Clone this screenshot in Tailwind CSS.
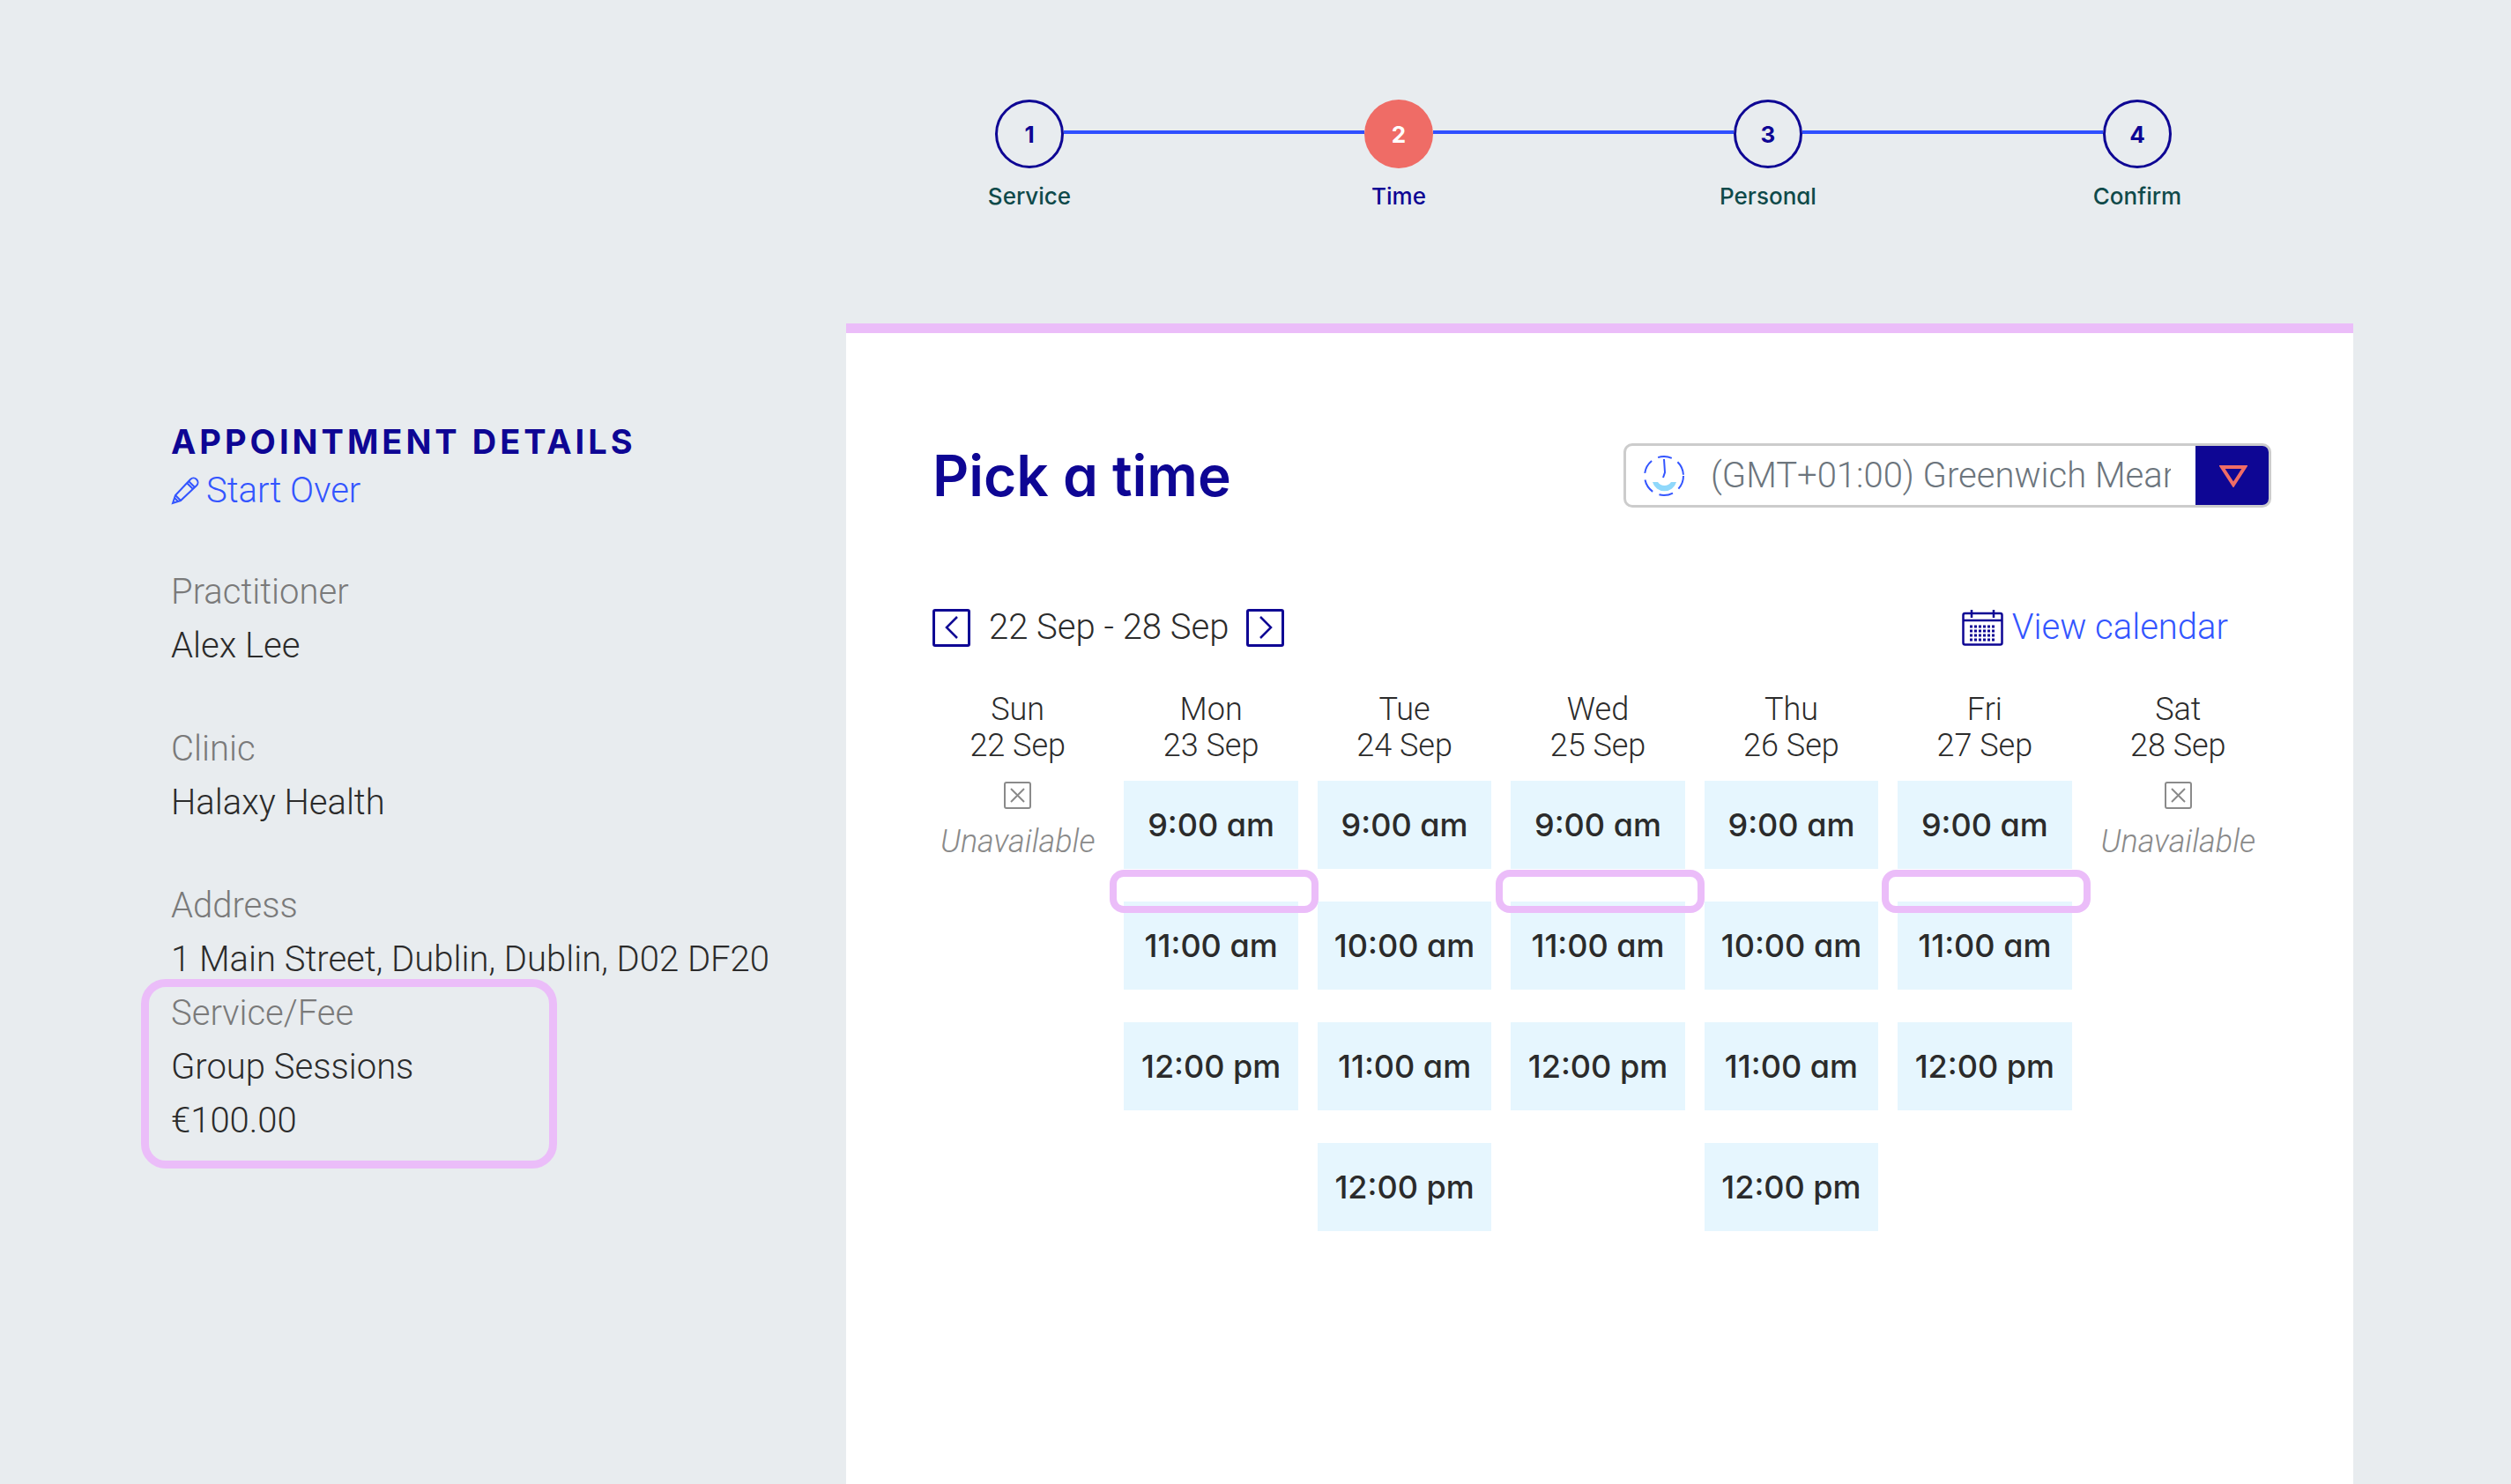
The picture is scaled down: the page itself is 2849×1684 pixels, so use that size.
<!DOCTYPE html>
<html>
<head>
<meta charset="utf-8">
<script src="https://cdn.jsdelivr.net/npm/@tailwindcss/browser@4"></script>
</head>
<body class="m-0 bg-[#e8ecef] font-['Roboto',sans-serif] font-light text-[#2b2b2b]">
<div class="relative flex h-[1684px] w-[2849px] overflow-hidden">
  <aside class="w-[960px] shrink-0 pl-[194px] pt-[476px]">
    <h2 class="font-['Inter',sans-serif] text-[38px] leading-[50px] font-bold tracking-[4px] text-[#0e0694]">APPOINTMENT DETAILS</h2>
    <a class="flex h-[62px] items-center gap-[8px] text-[40px] text-[#3355ff]">
      <svg class="h-[32px] w-[32px]" viewBox="0 0 32 32" fill="none" stroke="currentColor" stroke-width="2"><path d="M2 30l3-9L22 3c2-2 5-2 7 0s2 5 0 7L11 27z"/><path d="M5 21l6 6M20 5l7 7M18 7l7 7M4 24l4 4"/></svg>
      Start Over
    </a>
    <div class="mt-[53px] text-[40px] leading-[61px]">
      <p class="text-[#7a7a7a]">Practitioner</p>
      <p>Alex Lee</p>
      <p class="mt-[56px] text-[#7a7a7a]">Clinic</p>
      <p>Halaxy Health</p>
      <p class="mt-[56px] text-[#7a7a7a]">Address</p>
      <p>1 Main Street, Dublin, Dublin, D02 DF20</p>
      <p class="text-[#7a7a7a]">Service/Fee</p>
      <p>Group Sessions</p>
      <p>€100.00</p>
    </div>
  </aside>
  <main class="flex w-[1710px] shrink-0 flex-col">
    <nav class="ml-[128px] flex w-[1417px] pt-[113px] h-[367px] items-start font-['Inter',sans-serif] [font-feature-settings:'cv11'] text-[26px] font-medium text-[#0f4a4a]">
      <div class="flex w-[160px] shrink-0 flex-col items-center gap-[12px]">
        <span class="flex h-[78px] w-[78px] items-center justify-center rounded-full border-[3px] border-[#0e0694] font-bold text-[#0e0694]">1</span>
        <span>Service</span>
      </div>
      <span class="mx-[-41px] mt-[35px] h-[4px] flex-1 bg-[#2f4fff]"></span>
      <div class="flex w-[160px] shrink-0 flex-col items-center gap-[12px]">
        <span class="flex h-[78px] w-[78px] items-center justify-center rounded-full bg-[#ef6c66] font-bold text-white">2</span>
        <span class="text-[#0e0694]">Time</span>
      </div>
      <span class="mx-[-41px] mt-[35px] h-[4px] flex-1 bg-[#2f4fff]"></span>
      <div class="flex w-[160px] shrink-0 flex-col items-center gap-[12px]">
        <span class="flex h-[78px] w-[78px] items-center justify-center rounded-full border-[3px] border-[#0e0694] font-bold text-[#0e0694]">3</span>
        <span>Personal</span>
      </div>
      <span class="mx-[-41px] mt-[35px] h-[4px] flex-1 bg-[#2f4fff]"></span>
      <div class="flex w-[160px] shrink-0 flex-col items-center gap-[12px]">
        <span class="flex h-[78px] w-[78px] items-center justify-center rounded-full border-[3px] border-[#0e0694] font-bold text-[#0e0694]">4</span>
        <span>Confirm</span>
      </div>
    </nav>
    <section class="flex-1 border-t-[11px] border-[#ebbdf9] bg-white pl-[98px] pr-[93px]">
      <div class="mt-[125px] flex h-[73px] items-center justify-between">
        <h1 class="font-['Inter',sans-serif] [font-feature-settings:'cv11'] text-[64px] font-semibold text-[#0e0694]">Pick a time</h1>
        <div class="flex h-[73px] w-[735px] overflow-hidden rounded-[10px] border-[3px] border-[#cccccc]">
          <div class="flex min-w-0 flex-1 items-center pl-[18px] pr-[28px]">
            <svg class="mr-[28px] h-[50px] w-[50px] shrink-0" viewBox="0 0 50 50" fill="none" stroke="#3355ff" stroke-width="2">
              <path d="M12 32a14 14 0 0 0 27 0l-6 0a9 9 0 0 1-15 0z" fill="#8fd8fb" stroke="none"/>
              <circle cx="25" cy="25" r="22" stroke-dasharray="16 8"/>
              <path d="M25 6l1 15-2 6"/>
            </svg>
            <span class="overflow-hidden whitespace-nowrap text-[40px] text-[#6c757d]">(GMT+01:00) Greenwich Mean Time</span>
          </div>
          <div class="-my-[3px] -mr-[3px] flex w-[86px] shrink-0 items-center justify-center bg-[#0e0694]">
            <svg class="h-[26px] w-[32px]" viewBox="0 0 32 26" fill="none" stroke="#ef6c66" stroke-width="4"><path d="M3 3h26L16 23z"/></svg>
          </div>
        </div>
      </div>
      <div class="mt-[113px] flex h-[46px] items-center justify-between pr-[49px]">
        <div class="flex items-center">
          <span class="flex h-[43px] w-[43px] items-center justify-center rounded-[3px] border-[3px] border-[#0e0694]">
            <svg class="h-[28px] w-[16px]" viewBox="0 0 16 28" fill="none" stroke="#0e0694" stroke-width="2.5"><path d="M14 2L2 14l12 12"/></svg>
          </span>
          <span class="ml-[21px] mr-[20px] text-[40px]">22 Sep - 28 Sep</span>
          <span class="flex h-[43px] w-[43px] items-center justify-center rounded-[3px] border-[3px] border-[#0e0694]">
            <svg class="h-[28px] w-[16px]" viewBox="0 0 16 28" fill="none" stroke="#0e0694" stroke-width="2.5"><path d="M2 2l12 12L2 26"/></svg>
          </span>
        </div>
        <a class="flex items-center gap-[10px] text-[40px] text-[#3355ff]">
          <svg class="h-[42px] w-[47px]" viewBox="0 0 47 42" fill="none" stroke="#0e0694" stroke-width="2.5">
            <rect x="1.5" y="5" width="44" height="35.500" rx="2"/>
            <path d="M1.500 13h44M11 1v9M36 1v9"/>
            <path d="M9 20h29M9 25h29M9 30h29M9 35h29" stroke-width="3" stroke-dasharray="3 2"/>
          </svg>
          View calendar
        </a>
      </div>
      <div class="ml-[-2px] mt-[50px] grid w-[1514px] grid-cols-7 gap-x-[22px] text-center text-[36px] leading-[41px]">
        <div>
          <p>Sun</p><p>22 Sep</p>
          <svg class="mx-auto mt-[20px] h-[31px] w-[31px]" viewBox="0 0 31 31" fill="none" stroke="#8a8a8a" stroke-width="2"><rect x="1" y="1" width="29" height="29" rx="2"/><path d="M8 8l15 15M23 8L8 23"/></svg>
          <p class="mt-[17px] text-[#8a8a8a] italic">Unavailable</p>
        </div>
        <div>
          <p>Mon</p><p>23 Sep</p>
          <div class="mt-[19px] flex flex-col gap-[37px] font-['Inter',sans-serif] [font-feature-settings:'cv11'] font-medium">
            <a class="flex h-[100px] items-center justify-center bg-[#e6f6fe]">9:00 am</a>
            <a class="flex h-[100px] items-center justify-center bg-[#e6f6fe]">11:00 am</a>
            <a class="flex h-[100px] items-center justify-center bg-[#e6f6fe]">12:00 pm</a>
          </div>
        </div>
        <div>
          <p>Tue</p><p>24 Sep</p>
          <div class="mt-[19px] flex flex-col gap-[37px] font-['Inter',sans-serif] [font-feature-settings:'cv11'] font-medium">
            <a class="flex h-[100px] items-center justify-center bg-[#e6f6fe]">9:00 am</a>
            <a class="flex h-[100px] items-center justify-center bg-[#e6f6fe]">10:00 am</a>
            <a class="flex h-[100px] items-center justify-center bg-[#e6f6fe]">11:00 am</a>
            <a class="flex h-[100px] items-center justify-center bg-[#e6f6fe]">12:00 pm</a>
          </div>
        </div>
        <div>
          <p>Wed</p><p>25 Sep</p>
          <div class="mt-[19px] flex flex-col gap-[37px] font-['Inter',sans-serif] [font-feature-settings:'cv11'] font-medium">
            <a class="flex h-[100px] items-center justify-center bg-[#e6f6fe]">9:00 am</a>
            <a class="flex h-[100px] items-center justify-center bg-[#e6f6fe]">11:00 am</a>
            <a class="flex h-[100px] items-center justify-center bg-[#e6f6fe]">12:00 pm</a>
          </div>
        </div>
        <div>
          <p>Thu</p><p>26 Sep</p>
          <div class="mt-[19px] flex flex-col gap-[37px] font-['Inter',sans-serif] [font-feature-settings:'cv11'] font-medium">
            <a class="flex h-[100px] items-center justify-center bg-[#e6f6fe]">9:00 am</a>
            <a class="flex h-[100px] items-center justify-center bg-[#e6f6fe]">10:00 am</a>
            <a class="flex h-[100px] items-center justify-center bg-[#e6f6fe]">11:00 am</a>
            <a class="flex h-[100px] items-center justify-center bg-[#e6f6fe]">12:00 pm</a>
          </div>
        </div>
        <div>
          <p>Fri</p><p>27 Sep</p>
          <div class="mt-[19px] flex flex-col gap-[37px] font-['Inter',sans-serif] [font-feature-settings:'cv11'] font-medium">
            <a class="flex h-[100px] items-center justify-center bg-[#e6f6fe]">9:00 am</a>
            <a class="flex h-[100px] items-center justify-center bg-[#e6f6fe]">11:00 am</a>
            <a class="flex h-[100px] items-center justify-center bg-[#e6f6fe]">12:00 pm</a>
          </div>
        </div>
        <div>
          <p>Sat</p><p>28 Sep</p>
          <svg class="mx-auto mt-[20px] h-[31px] w-[31px]" viewBox="0 0 31 31" fill="none" stroke="#8a8a8a" stroke-width="2"><rect x="1" y="1" width="29" height="29" rx="2"/><path d="M8 8l15 15M23 8L8 23"/></svg>
          <p class="mt-[17px] text-[#8a8a8a] italic">Unavailable</p>
        </div>
      </div>
    </section>
  </main>
  <div class="absolute left-[160px] top-[1111px] h-[215px] w-[472px] rounded-[28px] border-[9px] border-[#ebbdf9]"></div>
  <div class="absolute left-[1259px] top-[987px] h-[49px] w-[237px] rounded-[16px] border-[8px] border-[#ebbdf9]"></div>
  <div class="absolute left-[1697px] top-[987px] h-[49px] w-[237px] rounded-[16px] border-[8px] border-[#ebbdf9]"></div>
  <div class="absolute left-[2135px] top-[987px] h-[49px] w-[237px] rounded-[16px] border-[8px] border-[#ebbdf9]"></div>
</div>
</body>
</html>
